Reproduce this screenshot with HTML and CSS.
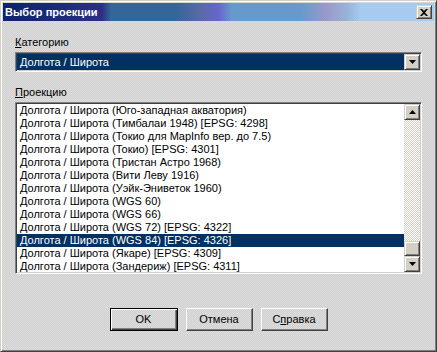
FILE: index.html
```html
<!DOCTYPE html>
<html lang="ru">
<head>
    <meta charset="UTF-8">
    <title>Выбор проекции</title>
    <link rel="stylesheet" href="styles.css">
</head>
<body>
    <div class="window">
        <div class="titlebar">
            <span class="title">Выбор проекции</span>
            <div class="close">
                <svg width="8" height="7" viewBox="0 0 8 7"><path d="M0 0h2l2 2 2-2h2L5 3.5 8 7H6L4 5 2 7H0l3-3.5z" fill="#000"/></svg>
            </div>
        </div>
        <div class="content">
            <div class="label"><u>К</u>атегорию</div>
            <div class="combo">
                <div class="combo-value">
                    <span class="combo-text">Долгота / Широта</span>
                </div>
                <div class="sbtn">
                    <svg width="7" height="4" viewBox="0 0 7 4"><path d="M0 0h7L3.5 4z" fill="#000"/></svg>
                </div>
            </div>
            <div class="label second"><u>П</u>роекцию</div>
            <div class="listbox">
                <ul class="items">
                    <li>Долгота / Широта (Юго-западная акватория)</li>
                    <li>Долгота / Широта (Тимбалаи 1948) [EPSG: 4298]</li>
                    <li>Долгота / Широта (Токио для MapInfo вер. до 7.5)</li>
                    <li>Долгота / Широта (Токио) [EPSG: 4301]</li>
                    <li>Долгота / Широта (Тристан Астро 1968)</li>
                    <li>Долгота / Широта (Вити Леву 1916)</li>
                    <li>Долгота / Широта (Уэйк-Эниветок 1960)</li>
                    <li>Долгота / Широта (WGS 60)</li>
                    <li>Долгота / Широта (WGS 66)</li>
                    <li>Долгота / Широта (WGS 72) [EPSG: 4322]</li>
                    <li class="selected">Долгота / Широта (WGS 84) [EPSG: 4326]</li>
                    <li>Долгота / Широта (Якаре) [EPSG: 4309]</li>
                    <li>Долгота / Широта (Зандериж) [EPSG: 4311]</li>
                </ul>
                <div class="scrollbar">
                    <div class="sbtn">
                        <svg width="7" height="4" viewBox="0 0 7 4"><path d="M0 4h7L3.5 0z" fill="#000"/></svg>
                    </div>
                    <div class="track">
                        <div class="thumb"></div>
                    </div>
                    <div class="sbtn">
                        <svg width="7" height="4" viewBox="0 0 7 4"><path d="M0 0h7L3.5 4z" fill="#000"/></svg>
                    </div>
                </div>
            </div>
            <div class="buttons">
                <div class="btn default">OK</div>
                <div class="btn">Отмена</div>
                <div class="btn">С<u>п</u>равка</div>
            </div>
        </div>
    </div>
</body>
</html>
```

FILE: styles.css
```css
body {
    margin: 0;
    font-family: 'Liberation Sans', Arial, sans-serif;
    font-size: 11px;
    line-height: 13px;
    color: #000;
}

.window {
    width: 437px;
    height: 352px;
    box-sizing: border-box;
    border: 1px solid;
    border-color: #d4d0c8 #404040 #404040 #d4d0c8;
    box-shadow: inset 1px 1px #fff, inset -1px -1px #808080;
    padding: 2px;
    background: repeating-conic-gradient(#d0d0d0 0 25%, #dddddd 0 50%) 0 0 / 2px 2px;
}

.titlebar {
    height: 18px;
    display: flex;
    align-items: center;
    justify-content: space-between;
    padding: 0 2px;
    background: linear-gradient(to right, #0a246a 0%, #2c2f84 23%, #336699 25%, #336699 40%, #5a6aa8 46%, #6666cc 50%, #6699cc 53%, #6699cc 69%, #9999cc 75%, #99b4d8 80%, #a6caf0 83%, #a6caf0 100%);
}

.title {
    color: #fff;
    font-weight: bold;
}

.close,
.sbtn {
    box-sizing: border-box;
    width: 16px;
    height: 14px;
    display: flex;
    align-items: center;
    justify-content: center;
    background: #d4d0c8;
    border: 1px solid;
    border-color: #d4d0c8 #404040 #404040 #d4d0c8;
    box-shadow: inset 1px 1px #fff, inset -1px -1px #808080;
}

.sbtn {
    height: 16px;
    flex-shrink: 0;
}

.content {
    padding: 15px 12px 0;
}

.label u,
.btn u {
    text-underline-offset: 1px;
}

.label {
    height: 13px;
}

.label.second {
    margin-top: 14px;
}

.combo,
.listbox {
    box-sizing: border-box;
    display: flex;
    margin-top: 3px;
    border: 1px solid;
    border-color: #808080 #fff #fff #808080;
    box-shadow: inset 1px 1px #404040, inset -1px -1px #d4d0c8;
    padding: 1px;
    background: #fff;
}

.combo {
    height: 20px;
}

.combo-value {
    flex: 1;
    background: #003162;
    color: #fff;
    padding-left: 3px;
    line-height: 16px;
}

.listbox {
    height: 172px;
}

.items {
    flex: 1;
    margin: 0;
    padding: 0;
    list-style: none;
    overflow: hidden;
}

.items li {
    height: 13px;
    padding-left: 3px;
    white-space: nowrap;
}

.items li.selected {
    background: #003162;
    color: #fff;
}

.scrollbar {
    width: 16px;
    display: flex;
    flex-direction: column;
}

.track {
    flex: 1;
    display: flex;
    flex-direction: column;
    justify-content: flex-end;
    background: repeating-conic-gradient(#d4d0c8 0 25%, #fff 0 50%) 0 0 / 2px 2px;
}

.thumb {
    box-sizing: border-box;
    height: 15px;
    background: #d4d0c8;
    border: 1px solid;
    border-color: #d4d0c8 #404040 #404040 #d4d0c8;
    box-shadow: inset 1px 1px #fff, inset -1px -1px #808080;
}

.buttons {
    display: flex;
    justify-content: center;
    gap: 8px;
    margin-top: 34px;
}

.btn {
    box-sizing: border-box;
    width: 67px;
    height: 23px;
    display: flex;
    align-items: center;
    justify-content: center;
    border: 1px solid;
    border-color: #fff #404040 #404040 #fff;
    box-shadow: inset -1px -1px #808080;
}

.btn.default {
    width: 68px;
    border-color: #000;
    box-shadow: inset 1px 1px #fff, inset -1px -1px #404040, inset -2px -2px #808080;
}
```
